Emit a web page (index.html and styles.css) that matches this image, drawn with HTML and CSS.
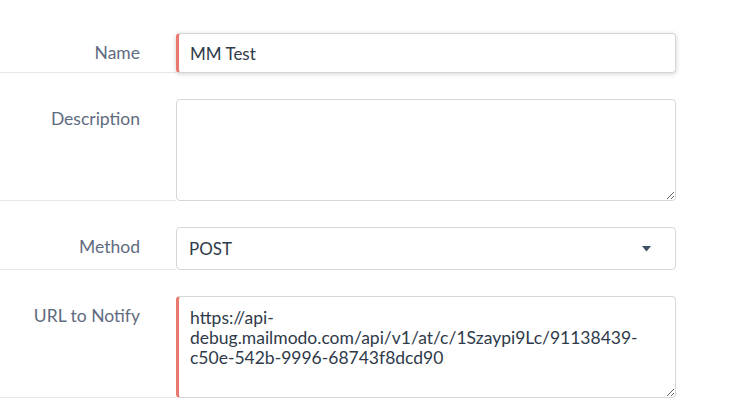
FILE: index.html
```html
<!DOCTYPE html>
<html>
<head>
<meta charset="utf-8">
<link rel="stylesheet" href="styles.css">
</head>
<body>
<div class="form">
  <div class="row">
    <div class="label">Name</div>
    <div class="field"><input class="input required focused" type="text" value="MM Test"></div>
  </div>
  <div class="row">
    <div class="label">Description</div>
    <div class="field"><textarea class="textarea"></textarea></div>
  </div>
  <div class="row">
    <div class="label">Method</div>
    <div class="field">
      <div class="select"><span>POST</span>
        <svg class="caret" width="9" height="6" viewBox="0 0 9 6"><path d="M0 0 H9 L4.5 5.5 Z" fill="#3e4f66"/></svg>
      </div>
    </div>
  </div>
  <div class="row">
    <div class="label">URL to Notify</div>
    <div class="field"><textarea class="textarea required">https://api-debug.mailmodo.com/api/v1/at/c/1Szaypi9Lc/91138439-c50e-542b-9996-68743f8dcd90</textarea></div>
  </div>
</div>
</body>
</html>
```
FILE: styles.css
```css
html, body {
  margin: 0;
  padding: 0;
  background: #ffffff;
}
body {
  font-family: Lato, "Noto Sans", sans-serif;
}
.form {
  padding-top: 7px;
}
.row {
  display: flex;
}
.label {
  width: 140px;
  padding: 36px 36px 0 0;
  line-height: 20px;
  font-size: 17.5px;
  color: #5f6b80;
  text-align: right;
  border-bottom: 1px solid #e6e8eb;
}
.field {
  padding-top: 26px;
  width: 500px;
  display: flex;
}
.input, .textarea, .select {
  box-sizing: border-box;
  width: 500px;
  border: 1px solid #d3d7dc;
  border-radius: 4px;
  font-family: Lato, "Noto Sans", sans-serif;
  font-size: 17px;
  color: #2f3a4a;
  background: #fff;
  margin: 0;
  outline: none;
}
.input {
  height: 40px;
  padding: 0 12px 0 11px;
}
.focused {
  box-shadow: 0 1px 5px rgba(0, 0, 0, 0.18);
}
.required {
  border-left: 3px solid #e9786f;
}
.textarea {
  display: block;
  height: 102px;
  padding: 11px 12px 10px 11px;
  font-size: 17.5px;
  line-height: 20px;
  resize: vertical;
}
.textarea:not(.required) {
  padding-left: 12px;
}
.select {
  height: 43px;
  padding: 0 24px 0 12px;
  display: flex;
  align-items: center;
  justify-content: space-between;
}
.caret {
  display: block;
}
```
